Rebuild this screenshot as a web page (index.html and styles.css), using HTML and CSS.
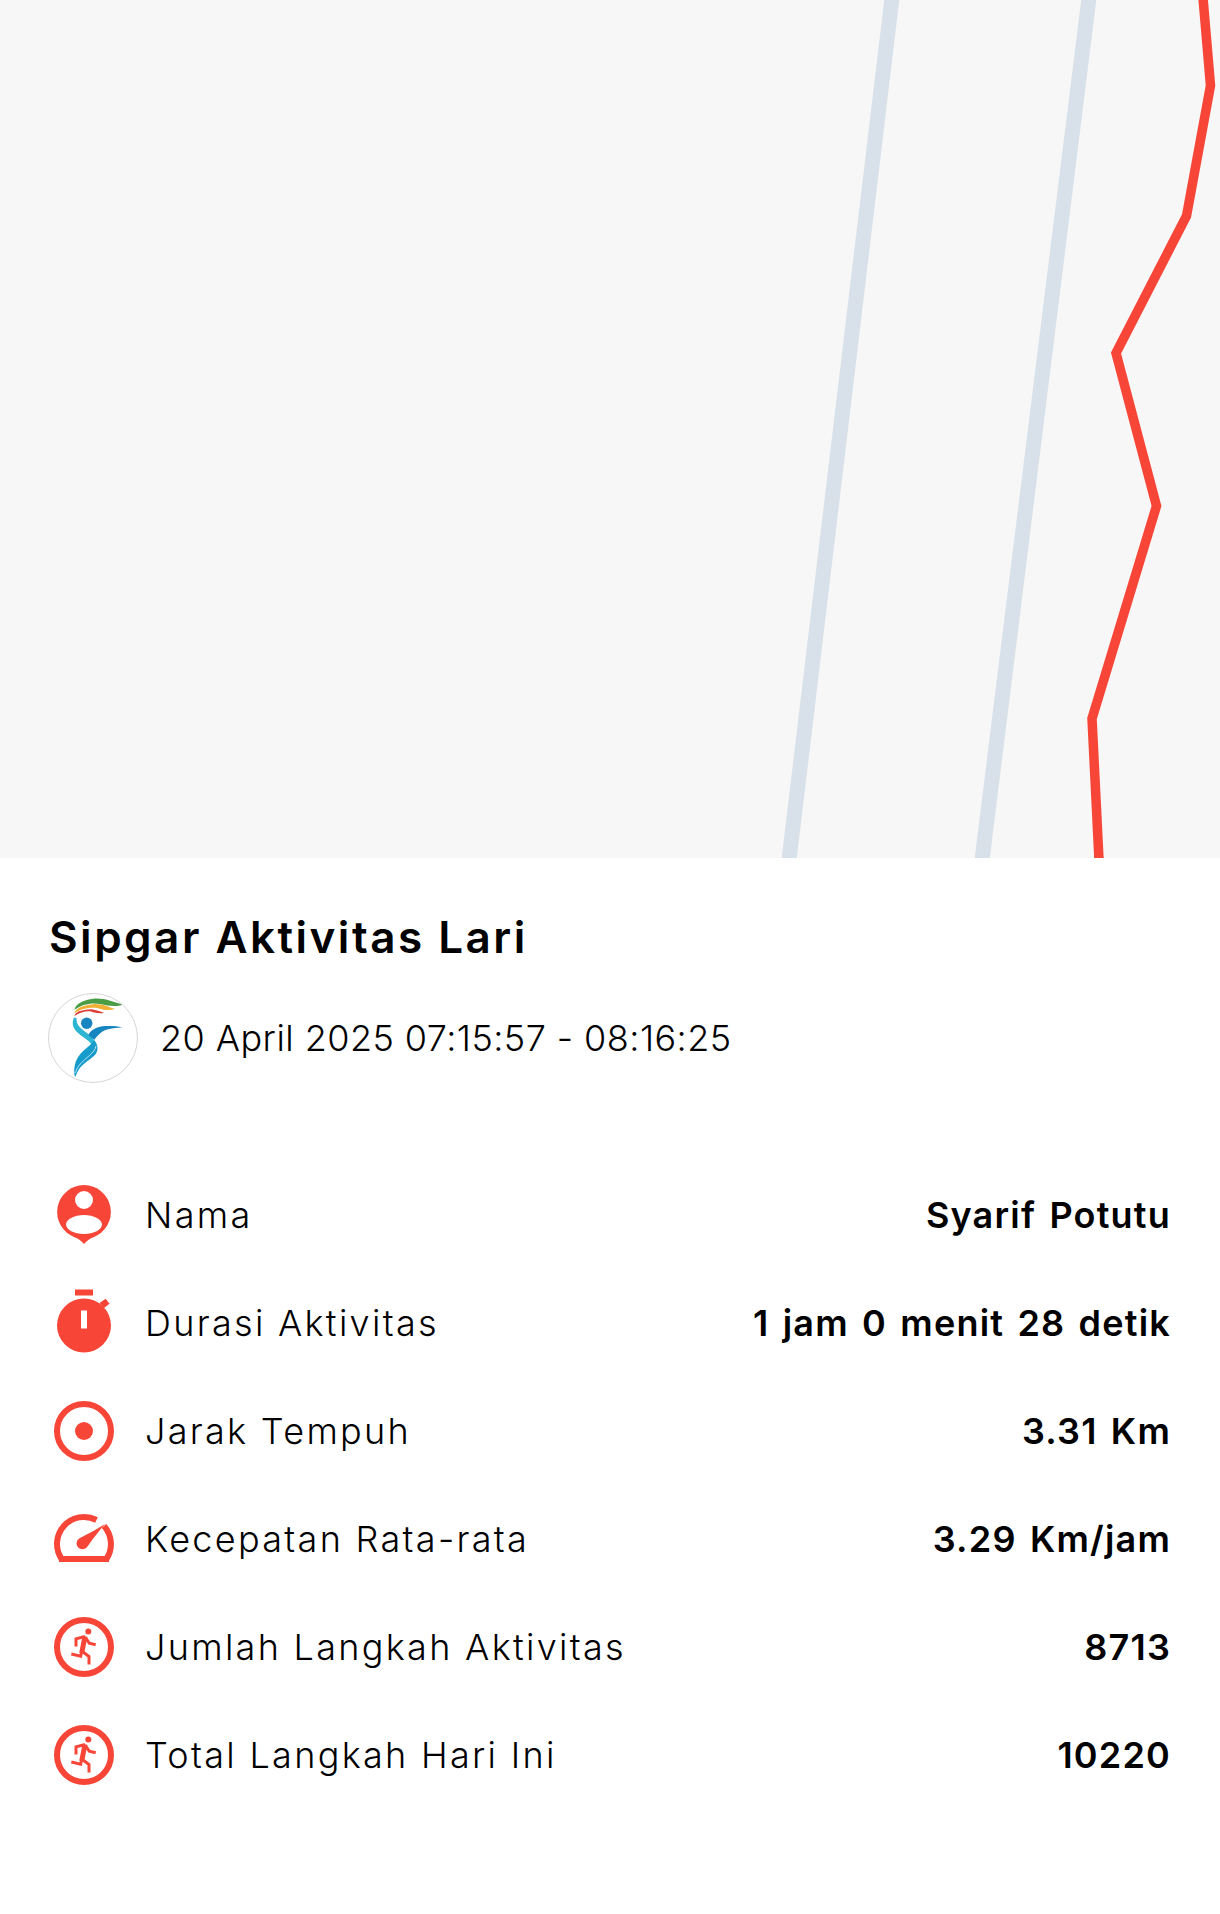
FILE: index.html
```html
<!DOCTYPE html>
<html lang="id">
<head>
<meta charset="utf-8">
<title>Sipgar Aktivitas Lari</title>
<link rel="stylesheet" href="styles.css">
</head>
<body>
<section class="map">
  <svg class="map-svg" viewBox="0 0 1220 858" width="1220" height="858">
    <path class="road" d="M892 -2L789 860"/>
    <path class="road" d="M1089 -2L982 860"/>
    <path class="route" d="M1203 -2L1210.500 85.500L1186.500 216L1116 353L1156.500 506L1092 718.500L1099 860"/>
  </svg>
</section>
<main class="panel">
  <h1 class="title">Sipgar Aktivitas Lari</h1>
  <div class="meta">
    <div class="logo">
      <svg viewBox="0 0 90 90" width="90" height="90">
        <path fill="#4a9d45" d="M26.300 17C28 10 37 6.300 47 5.500C57 5 66 9 75.300 11.700C68 14 60.300 13 52 11C44 9.300 33.700 11 26.300 17Z"/>
        <path fill="#efb035" d="M26.300 20.300C28 15 35 12 47 11C55 11 61 14 67 16C61 18 55.300 17 49 15C43.700 14 33.700 15 26.300 20.300Z"/>
        <path fill="#de3b35" d="M26.300 23C28 19 32 17 43.700 16.300C48 17 52 18.500 56 19.700C52 21 47 19.700 43 18.500C38 17.500 32 19.700 26.300 23Z"/>
        <circle fill="#1685c0" cx="38.700" cy="30.300" r="5.700"/>
        <path fill="#2cb6d4" d="M26 24.500C24 29 24 34 29 39C34 44 41 47 44 52L47 50C45 44 39 40 35 37C31 34 28 30 28.500 25Z"/>
        <path fill="#1685c0" d="M40.300 42C43 36 50 33.700 57 33C63 32.700 69 33 74.300 34.300C69 35 65 35 60.300 36.300C54 37.500 50 42 46.300 47Z"/>
        <path fill="#159ccb" d="M46.300 47C50 52 51 57 47 62C42 67 33 71 29.500 79L27 84.300C25.500 78 26 70 30.300 63.700C33 59.500 38 55.500 42 52Z"/>
        <path fill="none" stroke="#fff" stroke-width="0.700" d="M48 53C47 60 37 65 31.500 72C29 75 28 78 27.500 80"/>
      </svg>
    </div>
    <p class="date">20 April 2025 07:15:57 - 08:16:25</p>
  </div>
  <ul class="stats">
    <li class="stat">
      <svg class="icon" viewBox="0 0 70 70" width="70" height="70"><path class="fill" fill-rule="evenodd" d="M35 5A27 27 0 0 1 44 57.400C40.500 58.500 38 60.500 35 64C32 60.500 29.500 58.500 26 57.400A27 27 0 0 1 35 5ZM35 11A9 9 0 1 0 35 29A9 9 0 1 0 35 11ZM35 35C25 35 17 39.500 17 44.500C17 49.500 25 54 35 54C45 54 53 49.500 53 44.500C53 39.500 45 35 35 35Z"/></svg>
      <span class="label">Nama</span><span class="value">Syarif Potutu</span>
    </li>
    <li class="stat">
      <svg class="icon" viewBox="0 0 70 70" width="70" height="70"><path class="fill" fill-rule="evenodd" d="M26 1.500H44V7.500H26ZM35 10.500A27 27 0 1 1 35 64.500A27 27 0 1 1 35 10.500ZM32 22.500V40.500H38V22.500Z"/><path class="fill" d="M50.500 15L56.700 10.800L60.500 15.800L55 20Z"/></svg>
      <span class="label">Durasi Aktivitas</span><span class="value">1 jam 0 menit 28 detik</span>
    </li>
    <li class="stat">
      <svg class="icon" viewBox="0 0 70 70" width="70" height="70"><circle class="ring" cx="35" cy="35" r="27"/><circle class="fill" cx="35" cy="35" r="9"/></svg>
      <span class="label">Jarak Tempuh</span><span class="value">3.31 Km</span>
    </li>
    <li class="stat">
      <svg class="icon" viewBox="0 0 70 70" width="70" height="70"><path class="ring" d="M12.600 55A27 27 0 0 1 47.500 16M55 22A27 27 0 0 1 57.400 55"/><path class="ring" d="M10 55H60"/><path class="fill" d="M56 20C50 27 43 36 38.500 42.500C36 46 30.500 46 28.500 42.500C26.500 39 28 35.500 31 34C39 30 48 25 56 20Z"/></svg>
      <span class="label">Kecepatan Rata-rata</span><span class="value">3.29 Km/jam</span>
    </li>
    <li class="stat">
      <svg class="icon" viewBox="0 0 70 70" width="70" height="70"><circle class="ring" cx="35" cy="35" r="27"/><circle class="fill" cx="39.300" cy="19.500" r="3"/><path class="runner" d="M27 34.500V26.800L36 24.500M32.700 39L40 44.500V52.500M36 25L40.300 31.200L46.700 32.800M32.700 38.500L31.700 44.200L22.300 42"/><path class="torso" d="M36 24.500L32.700 41"/></svg>
      <span class="label">Jumlah Langkah Aktivitas</span><span class="value">8713</span>
    </li>
    <li class="stat">
      <svg class="icon" viewBox="0 0 70 70" width="70" height="70"><circle class="ring" cx="35" cy="35" r="27"/><circle class="fill" cx="39.300" cy="19.500" r="3"/><path class="runner" d="M27 34.500V26.800L36 24.500M32.700 39L40 44.500V52.500M36 25L40.300 31.200L46.700 32.800M32.700 38.500L31.700 44.200L22.300 42"/><path class="torso" d="M36 24.500L32.700 41"/></svg>
      <span class="label">Total Langkah Hari Ini</span><span class="value">10220</span>
    </li>
  </ul>
</main>
</body>
</html>
```
FILE: styles.css
```css
* { box-sizing: border-box; }
html, body { margin: 0; padding: 0; background: #fff; }
body { font-family: "Inter", "Liberation Sans", sans-serif; color: #000; width: 1220px; height: 1914px; overflow: hidden; }
.map { height: 858px; background: #f7f7f7; overflow: hidden; }
.map-svg { display: block; }
.road { fill: none; stroke: #d8e1e9; stroke-width: 15; }
.route { fill: none; stroke: #f74638; stroke-width: 9.5; stroke-linejoin: miter; }
.panel { padding: 49px 49px 0; }
.title { margin: 0; font-size: 44px; line-height: 60px; font-weight: 600; letter-spacing: 2.5px; }
.meta { display: flex; align-items: center; gap: 22px; margin: 26px 0 0 -1px; }
.logo { width: 90px; height: 90px; border: 1px solid #d6d6d6; border-radius: 50%; overflow: hidden; flex: none; }
.logo svg { display: block; margin: -1px; }
.date { margin: 0; font-size: 36px; font-weight: 300; letter-spacing: 0.45px; }
.stats { list-style: none; margin: 96.5px 0 0; padding: 0; display: flex; flex-direction: column; gap: 38.2px; }
.stat { display: flex; align-items: center; height: 70px; }
.icon { flex: none; width: 70px; height: 70px; margin-right: 26px; }
.label { font-size: 36px; font-weight: 300; letter-spacing: 2.3px; }
.value { margin-left: auto; font-size: 36px; font-weight: 600; letter-spacing: 1.2px; word-spacing: 3px; }
.fill { fill: #f74638; }
.ring { fill: none; stroke: #f74638; stroke-width: 6; }
.runner { fill: none; stroke: #f74638; stroke-width: 3; stroke-linejoin: miter; }
.torso { fill: none; stroke: #f74638; stroke-width: 5; }
```
